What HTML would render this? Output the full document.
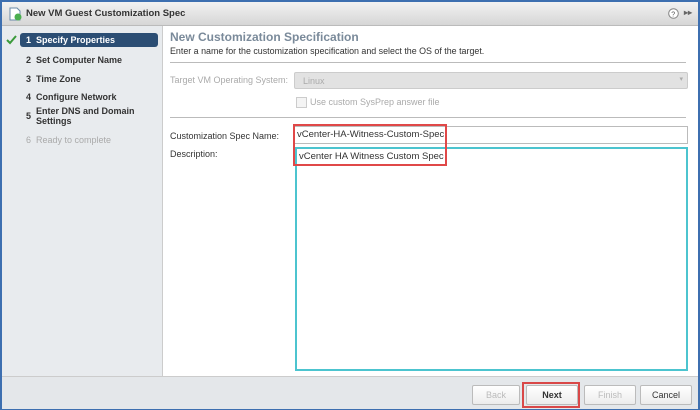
<!DOCTYPE html>
<html><head><style>
body{margin:0;width:700px;height:410px;overflow:hidden;font-family:"Liberation Sans",sans-serif;font-size:9px;color:#333;background:#fff}
.win{position:absolute;left:0;top:0;width:696px;height:406px;border:2px solid #3d6fb0;background:#fff}
.title{position:absolute;left:0;top:0;width:696px;height:23px;background:linear-gradient(#f2f2f2,#d6d6d6);border-bottom:1px solid #bbb}
.title span{position:absolute;left:24px;top:6px;font-weight:bold;font-size:9.5px;color:#333}
.left{position:absolute;left:0;top:24px;width:160px;height:350px;background:#e8ebee;border-right:1px solid #ccc}
.step{position:absolute;left:20px;font-weight:bold;font-size:9px;color:#333}
.abs{position:absolute}
.foot{position:absolute;left:0;top:374px;width:696px;height:32px;background:#e4e7ea;border-top:1px solid #ccc}
.btn{position:absolute;top:8px;height:18px;border:1px solid #bbb;border-radius:2px;background:linear-gradient(#fff,#ececec);text-align:center;line-height:18px;font-size:9px}
</style></head><body>
<div class="win">
<div class="title">
<svg class="abs" style="left:6px;top:5px" width="14" height="14"><path d="M2 1h7l3 3v9H2z" fill="#fff" stroke="#6a8aa8"/><circle cx="10" cy="10" r="3.5" fill="#4caf50"/></svg>
<span>New VM Guest Customization Spec</span>
<svg class="abs" style="left:666px;top:6px" width="11" height="11"><circle cx="5.5" cy="5.5" r="4.8" fill="#fff" stroke="#888"/><text x="3.3" y="8.5" font-size="7" fill="#555" font-family="Liberation Sans">?</text></svg>
<span style="left:682px;top:6px;font-size:8px;color:#666">▸▸</span>
</div>
<div class="left">
<svg class="abs" style="left:4px;top:9px" width="12" height="10"><path d="M1 5l3 3 6-7" stroke="#3a9a3a" stroke-width="2" fill="none"/></svg>
<div class="abs" style="left:18px;top:7px;width:138px;height:14px;background:#2c4e74;border-radius:3px"></div>
<div class="step" style="top:9px;left:24px;color:#fff">1&nbsp; Specify Properties</div>
<div class="step" style="top:29px;left:24px">2&nbsp; Set Computer Name</div>
<div class="step" style="top:48px;left:24px">3&nbsp; Time Zone</div>
<div class="step" style="top:66px;left:24px">4&nbsp; Configure Network</div>
<div class="step" style="top:85px;left:24px">5</div>
<div class="step" style="top:80px;left:34px;line-height:10px">Enter DNS and Domain<br>Settings</div>
<div class="step" style="top:109px;left:24px;color:#aaa;font-weight:normal">6&nbsp; Ready to complete</div>
</div>
<div class="abs" style="left:168px;top:28px;font-size:12px;font-weight:bold;color:#7a8a9a">New Customization Specification</div>
<div class="abs" style="left:168px;top:44px;font-size:8.9px">Enter a name for the customization specification and select the OS of the target.</div>
<div class="abs" style="left:168px;top:60px;width:516px;border-top:1px solid #bbb"></div>
<div class="abs" style="left:168px;top:73px;color:#aaa">Target VM Operating System:</div>
<div class="abs" style="left:292px;top:70px;width:392px;height:15px;background:#e2e2e2;border:1px solid #ccc;border-radius:2px"><span class="abs" style="left:8px;top:3px;color:#aaa">Linux</span><span class="abs" style="right:4px;top:2px;color:#aaa;font-size:7px">▾</span></div>
<div class="abs" style="left:294px;top:95px;width:9px;height:9px;border:1px solid #ccc;background:#f4f4f4"></div>
<div class="abs" style="left:308px;top:95px;color:#aaa">Use custom SysPrep answer file</div>
<div class="abs" style="left:168px;top:115px;width:516px;border-top:1px solid #bbb"></div>
<div class="abs" style="left:168px;top:129px">Customization Spec Name:</div>
<div class="abs" style="left:168px;top:147px">Description:</div>
<div class="abs" style="left:292px;top:124px;width:392px;height:16px;border:1px solid #bbb;background:#fff"></div>
<div class="abs" style="left:295px;top:127px;font-size:9.5px">vCenter-HA-Witness-Custom-Spec</div>
<div class="abs" style="left:293px;top:145px;width:389px;height:220px;border:2px solid #4cc4cf"></div>
<div class="abs" style="left:297px;top:149px;font-size:9.5px">vCenter HA Witness Custom Spec</div>
<div class="abs" style="left:291px;top:122px;width:150px;height:38px;border:2px solid #e04848"></div>
<div class="foot">
<div class="btn" style="left:470px;width:46px;color:#bbb">Back</div>
<div class="btn" style="left:524px;width:50px;font-weight:bold">Next</div>
<div class="abs" style="left:520px;top:5px;width:54px;height:22px;border:2px solid #d94848"></div>
<div class="btn" style="left:582px;width:50px;color:#bbb">Finish</div>
<div class="btn" style="left:638px;width:50px">Cancel</div>
</div>
</div>
</body></html>
